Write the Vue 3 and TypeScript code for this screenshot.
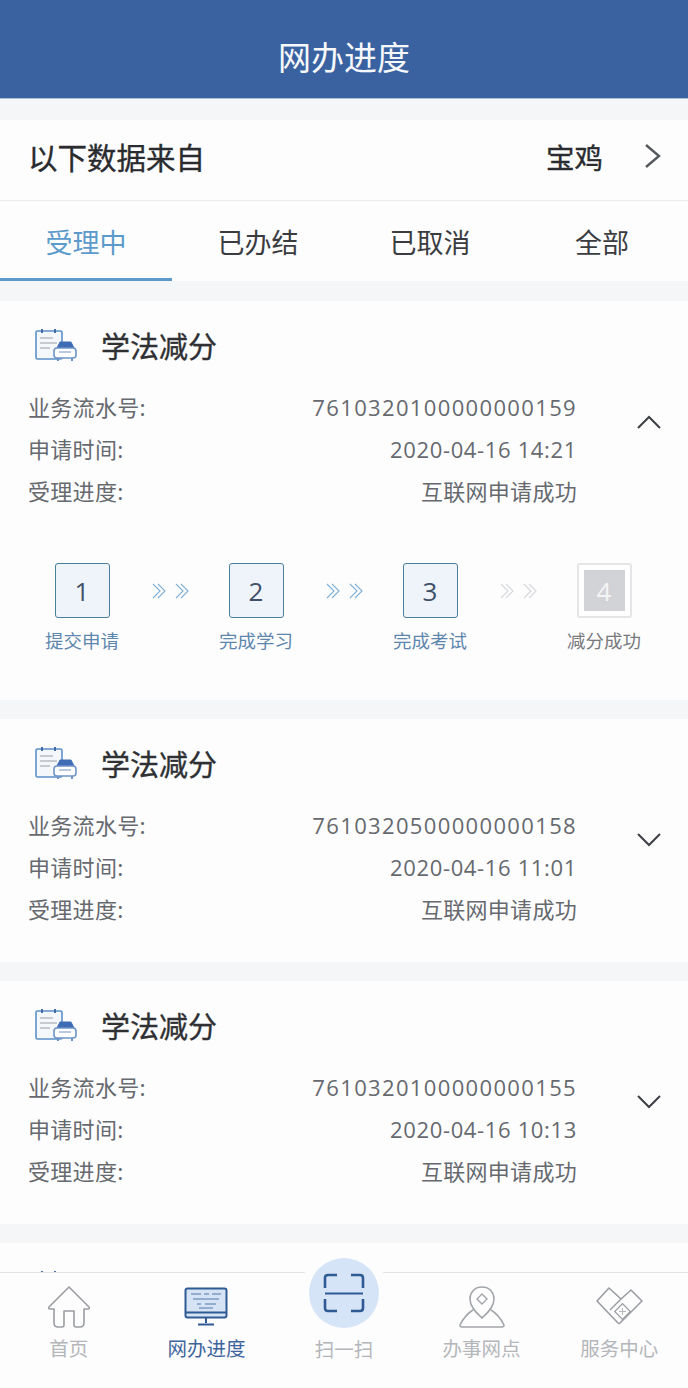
<script setup lang="ts">
interface Step {
  num: number
  label: string
  done: boolean
}

interface Ticket {
  id: number
  serial: string
  time: string
  open: boolean
}

const tabs = ['受理中', '已办结', '已取消', '全部']

const steps: Step[] = [
  { num: 1, label: '提交申请', done: true },
  { num: 2, label: '完成学习', done: true },
  { num: 3, label: '完成考试', done: true },
  { num: 4, label: '减分成功', done: false },
]

// last one sits behind the bottom nav, only its title peeks out
const tickets: Ticket[] = [
  { id: 1, serial: '7610320100000000159', time: '2020-04-16 14:21', open: true },
  { id: 2, serial: '7610320500000000158', time: '2020-04-16 11:01', open: false },
  { id: 3, serial: '7610320100000000155', time: '2020-04-16 10:13', open: false },
  { id: 4, serial: '', time: '', open: false },
]
</script>

<template>
  <div class="page">
    <header class="top-bar">网办进度</header>

    <section class="source-row">
      <span class="source-label">以下数据来自</span>
      <span class="source-city">宝鸡</span>
      <svg class="source-arrow" width="18" height="26" viewBox="0 0 18 26">
        <path d="M2 2 L15 13 L2 24" fill="none" stroke="#55585c" stroke-width="2.4" />
      </svg>
    </section>

    <nav class="tabs">
      <div v-for="(tab, i) in tabs" :key="tab" class="tab" :class="{ active: i === 0 }">{{ tab }}</div>
    </nav>

    <article v-for="t in tickets" :key="t.id" class="card" :class="{ open: t.open }">
      <div class="card-title">
        <svg class="card-icon" width="42" height="34" viewBox="0 0 42 34">
          <rect x="1" y="3" width="26" height="28" rx="1.5" fill="#f4f8fd" stroke="#5b8fc9" stroke-width="1.6" />
          <path d="M7 1v4M20 1v4" stroke="#3a62a0" stroke-width="1.8" />
          <path d="M5 10h13M5 15h17M5 20h10" stroke="#9a9ea3" stroke-width="1.2" />
          <path d="M22 20l3-6h11l3 6z" fill="#3f6cb5" stroke="#3f6cb5" />
          <rect x="19" y="20" width="22" height="10" rx="3" fill="#fff" stroke="#6d94c6" stroke-width="1.6" />
          <path d="M23 30v3M37 30v3" stroke="#6d94c6" stroke-width="2" />
          <path d="M24 24h12" stroke="#b9c8dc" stroke-width="2" />
        </svg>
        <h2>学法减分</h2>
      </div>

      <div v-if="t.serial" class="info">
        <div class="rows">
          <div class="row">
            <span class="key">业务流水号:</span>
            <span class="value serial">{{ t.serial }}</span>
          </div>
          <div class="row">
            <span class="key">申请时间:</span>
            <span class="value">{{ t.time }}</span>
          </div>
          <div class="row">
            <span class="key">受理进度:</span>
            <span class="key">互联网申请成功</span>
          </div>
        </div>
        <svg class="fold" width="26" height="16" viewBox="0 0 26 16">
          <path :d="t.open ? 'M2 14 L13 3 L24 14' : 'M2 2 L13 13 L24 2'" fill="none" stroke="#3c3f44" stroke-width="2" />
        </svg>
      </div>

      <div v-if="t.open" class="steps">
        <template v-for="(s, i) in steps" :key="s.num">
          <div class="step" :class="{ pending: !s.done }">
            <div class="step-box"><span>{{ s.num }}</span></div>
            <div class="step-label">{{ s.label }}</div>
          </div>
          <svg v-if="i < steps.length - 1" class="step-arrows" :class="{ faint: !steps[i + 1].done }" width="38" height="16" viewBox="0 0 38 16">
            <path d="M1 1l7 7-7 7M6 1l7 7-7 7M24 1l7 7-7 7M29 1l7 7-7 7" fill="none" stroke="currentColor" stroke-width="1.1" />
          </svg>
        </template>
      </div>
    </article>

    <footer class="bottom-nav">
      <div class="nav-item">
        <svg width="44" height="44" viewBox="0 0 44 44">
          <path d="M22 2 L2 22 Q1 24 3 24 H7 V38 Q7 42 11 42 H15 Q17 42 17 40 V26 H27 V40 Q27 42 29 42 H33 Q37 42 37 38 V24 H41 Q43 24 42 22 Z" fill="none" stroke="#9a9da1" stroke-width="1.6" stroke-linejoin="round" />
        </svg>
        <span>首页</span>
      </div>
      <div class="nav-item current">
        <svg width="44" height="44" viewBox="0 0 44 44">
          <rect x="1.500" y="3.500" width="41" height="29" rx="2" fill="#d5e3f5" stroke="#2f5a94" stroke-width="2" />
          <path d="M2 27.500h40" stroke="#2f5a94" stroke-width="2" />
          <path d="M7 9h10M20 9h5M28 9h9M9 14h26M13 19h4M21 19h11M15 23h14" stroke="#4f78ad" stroke-width="1" />
          <path d="M22 33v5M14 39.500h16" stroke="#2f5a94" stroke-width="2" />
        </svg>
        <span>网办进度</span>
      </div>
      <div class="nav-item scan">
        <div class="scan-circle">
          <svg width="42" height="42" viewBox="0 0 42 42">
            <path d="M14 3H5Q2 3 2 6V16M28 3H37Q40 3 40 6V16M14 39H5Q2 39 2 36V27M28 39H37Q40 39 40 36V27" fill="none" stroke="#2f5a94" stroke-width="2.600" />
            <path d="M2 21.500h38" stroke="#2f5a94" stroke-width="2" />
          </svg>
        </div>
        <span>扫一扫</span>
      </div>
      <div class="nav-item">
        <svg width="48" height="44" viewBox="0 0 48 44">
          <path d="M24 2C16 2 12 8 12 14c0 9 8 15 12 19 4-4 12-10 12-19C36 8 32 2 24 2Z" fill="#fff" stroke="#a2a5a9" stroke-width="1.600" />
          <path d="M24 9l5 5-5 5-5-5z" fill="none" stroke="#a2a5a9" stroke-width="1.400" />
          <path d="M15 25C10 28 5 34 2 40Q2 42 4 42H44Q46 42 46 40C43 34 38 28 33 25" fill="none" stroke="#a2a5a9" stroke-width="1.600" />
        </svg>
        <span>办事网点</span>
      </div>
      <div class="nav-item">
        <svg width="48" height="44" viewBox="0 0 48 44">
          <path d="M14 3 L26 14 L36 5 L47 16 L25 38 Q24 39 23 38 L2 16 Z" fill="none" stroke="#9a9da1" stroke-width="1.600" stroke-linejoin="round" />
          <path d="M26 14 L15 25" stroke="#9a9da1" stroke-width="1.400" />
          <rect x="22" y="21" width="11" height="11" transform="rotate(-45 27.500 26.500)" fill="none" stroke="#9a9da1" stroke-width="1.200" />
          <path d="M24 26.500h7M27.500 23v7" stroke="#b5b7ba" stroke-width="1" />
        </svg>
        <span>服务中心</span>
      </div>
    </footer>
  </div>
</template>

<style>
html,
body {
  margin: 0;
  background: #f6f7f9;
}
</style>

<style scoped>
.page {
  position: relative;
  width: 688px;
  height: 1388px;
  overflow: hidden;
  background: #f5f6f8;
  font-family: "Noto Sans CJK SC", "Liberation Sans", sans-serif;
  color: #3a3d42;
}

.top-bar {
  height: 99px;
  box-sizing: border-box;
  padding-top: 32px;
  background: #3a62a0;
  color: #f6f8fb;
  font-size: 33px;
  line-height: 48px;
  text-align: center;
  border-bottom: 1px solid #a9c0dc;
}

.source-row {
  display: flex;
  align-items: center;
  height: 72px;
  margin-top: 21px;
  padding: 0 26px 8px 28px;
  background: #fdfdfe;
  border-bottom: 1px solid #ececee;
}

.source-label {
  flex: 1;
  font-size: 29.500px;
  color: #2a2b2e;
  -webkit-text-stroke: 0.35px #2a2b2e;
}

.source-city {
  margin-right: 41px;
  font-size: 28.500px;
  color: #2a2b2e;
  -webkit-text-stroke: 0.35px #2a2b2e;
}

.tabs {
  display: flex;
  height: 80px;
  background: #fdfdfe;
}

.tab {
  flex: 1;
  box-sizing: border-box;
  font-size: 27px;
  line-height: 82px;
  text-align: center;
  color: #3a3c40;
}

.tab.active {
  color: #5b9aca;
  border-bottom: 3px solid #5b9aca;
}

.card {
  height: 243px;
  box-sizing: border-box;
  margin-top: 19px;
  padding: 23px 0 0 28px;
  background: #fdfdfe;
}

.card.open {
  height: 399px;
  margin-top: 20px;
}

.card-title {
  display: flex;
  align-items: center;
  height: 42px;
}

.card-icon {
  margin: 0 24px 0 7px;
}

.card-title h2 {
  margin: 0;
  font-size: 29px;
  font-weight: 400;
  color: #2e3033;
  -webkit-text-stroke: 0.35px #2e3033;
}

.info {
  display: flex;
  align-items: flex-start;
  margin-top: 20px;
}

.rows {
  width: 549px;
}

.row {
  display: flex;
  justify-content: space-between;
  height: 42px;
  font-size: 22px;
  line-height: 42px;
  color: #66696e;
}

.key {
  margin-top: -1px;
  letter-spacing: 0.3px;
}

.value {
  font-family: "Open Sans", "Noto Sans CJK SC", sans-serif;
  letter-spacing: 0.65px;
}

.serial {
  letter-spacing: 1.350px;
}

.fold {
  margin: 28px 0 0 59px;
}

.steps {
  display: flex;
  align-items: flex-start;
  margin: 51px 0 0 -28px;
  padding-left: 45px;
}

.step {
  width: 74px;
  text-align: center;
}

.step-box {
  display: flex;
  align-items: center;
  justify-content: center;
  width: 55px;
  height: 55px;
  box-sizing: border-box;
  margin: 0 auto;
  border: 1.500px solid #4a7f99;
  border-radius: 3px;
  background: #eef4fa;
  font-family: "Open Sans", sans-serif;
  font-size: 26px;
  color: #3f5068;
}

.step-label {
  margin-top: 8px;
  font-size: 18.500px;
  line-height: 28px;
  white-space: nowrap;
  color: #5d86ad;
}

.step-arrows {
  width: 38px;
  margin: 20px 29px 0 33px;
  color: #7fb0d4;
}

.step-arrows.faint {
  color: #d5d7da;
}

.step.pending .step-box {
  padding: 5px;
  border: 2px solid #e4e5e7;
  background: #fff;
  color: #f4f4f5;
}

.step.pending .step-box span {
  display: flex;
  align-items: center;
  justify-content: center;
  width: 100%;
  height: 100%;
  background: #d2d3d6;
}

.step.pending .step-label {
  color: #77797d;
}

.bottom-nav {
  position: absolute;
  left: 0;
  right: 0;
  bottom: 0;
  display: flex;
  height: 115px;
  background: #fdfdfe;
  border-top: 1px solid #e3e4e7;
}

.nav-item {
  display: flex;
  flex-direction: column;
  align-items: center;
  width: 137.600px;
  padding-top: 12px;
  font-size: 19.500px;
  line-height: 30px;
  color: #b4b6ba;
}

.nav-item svg {
  margin-bottom: 4px;
}

.nav-item.current {
  color: #3d659c;
}

.nav-item.scan {
  position: relative;
  padding-top: 61px;
}

.scan-circle {
  position: absolute;
  top: -15px;
  left: 50%;
  display: flex;
  align-items: center;
  justify-content: center;
  width: 70px;
  height: 70px;
  margin-left: -35px;
  border-radius: 50%;
  background: #d5e4f6;
  box-shadow: 0 0 0 9px #fdfdfe;
}

.scan-circle svg {
  margin: 0;
}
</style>
